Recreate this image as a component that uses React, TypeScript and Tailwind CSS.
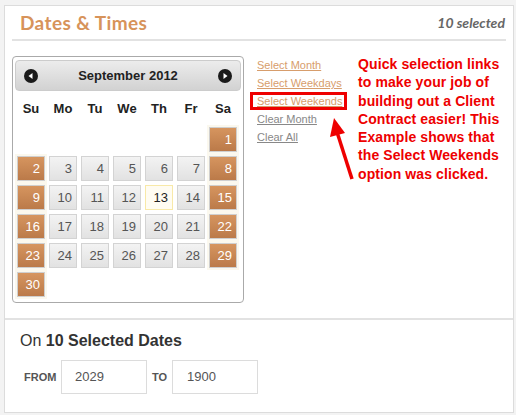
import React from "react";

const weeks: (number | null)[][] = [
  [null, null, null, null, null, null, 1],
  [2, 3, 4, 5, 6, 7, 8],
  [9, 10, 11, 12, 13, 14, 15],
  [16, 17, 18, 19, 20, 21, 22],
  [23, 24, 25, 26, 27, 28, 29],
  [30, null, null, null, null, null, null],
];

const days = ["Su", "Mo", "Tu", "We", "Th", "Fr", "Sa"];

function Arrow({ dir }: { dir: "l" | "r" }) {
  return (
    <svg width="14" height="14" viewBox="0 0 14 14">
      <circle cx="7" cy="7" r="7" fill="#1a1a1a" />
      {dir === "l" ? (
        <polygon points="4.5,7 8.5,4 8.5,10" fill="#fff" />
      ) : (
        <polygon points="9.5,7 5.5,4 5.5,10" fill="#fff" />
      )}
    </svg>
  );
}

function Cell({ d, col }: { d: number | null; col: number }) {
  if (d === null) return <div className="h-[29px] w-[32px]" />;
  const weekend = col === 0 || col === 6;
  const today = d === 13;
  let cls =
    "h-[25px] w-[28px] flex items-center justify-end pr-[4px] text-[13px] border ";
  if (weekend)
    cls +=
      "bg-gradient-to-b from-[#d6955f] to-[#bb7a49] border-[#cfcfcf] text-white";
  else if (today) cls += "bg-[#fffcf2] border-[#f8e9a8] text-[#222]";
  else
    cls +=
      "bg-gradient-to-b from-[#f3f3f3] to-[#e2e2e2] border-[#d3d3d3] text-[#555]";
  return (
    <div
      className={
        "h-[29px] w-[32px] flex items-center justify-center " +
        (weekend ? "bg-[#fbf8ee]" : "")
      }
    >
      <div className={cls}>{d}</div>
    </div>
  );
}

export default function App() {
  return (
    <div className="w-[516px] h-[415px] bg-[#f3f3f3] pt-[5px] pl-[4px] pr-[2px]" style={{ fontFamily: "'Liberation Sans', Arial, sans-serif" }}>
      <div className="relative w-[510px] h-[408px] bg-white border border-[#dcdcdc]">
        {/* header */}
        <div className="mx-[7px] h-[35px] border-b-2 border-[#e2e2e2] flex items-center justify-between pl-[8px] pr-[1px]">
          <span className="text-[19px] font-bold text-[#d7935a] tracking-[0.4px] mt-[1px]" style={{ fontFamily: "Lato, sans-serif" }}>
            Dates &amp; Times
          </span>
          <span className="text-[14px] font-bold italic text-[#666]" style={{ fontFamily: "Lato, sans-serif" }}>
            10 selected
          </span>
        </div>

        {/* body */}
        <div className="flex pl-[7px] pt-[15px] h-[278px]">
          <div className="w-[232px] h-[247px] border border-[#aaaaaa] rounded-[4px] px-[2px] pt-[3px]">
            <div className="h-[31px] rounded-[4px] border border-[#cccccc] bg-gradient-to-b from-[#ececec] to-[#d2d2d2] flex items-center justify-between px-[8px]">
              <Arrow dir="l" />
              <span className="text-[13px] font-bold text-[#222]">September 2012</span>
              <Arrow dir="r" />
            </div>
            <div className="flex mt-[5px]">
              {days.map((d) => (
                <div key={d} className="w-[32px] h-[26px] flex items-center justify-center text-[13px] font-bold text-[#222]">
                  {d}
                </div>
              ))}
            </div>
            <div className="mt-[3px]">
              {weeks.map((w, i) => (
                <div key={i} className="flex">
                  {w.map((d, j) => (
                    <Cell key={j} d={d} col={j} />
                  ))}
                </div>
              ))}
            </div>
          </div>

          <div className="ml-[6px] flex flex-col text-[11px] leading-[18px] pt-0">
            <a className="underline text-[#d79d6c] ml-[7px]">Select Month</a>
            <a className="underline text-[#d79d6c] ml-[7px]">Select Weekdays</a>
            <div className="border-[3px] border-[#ee0000] h-[18px] w-[97px] flex items-center">
              <a className="underline text-[#d79d6c] ml-[4px]">Select Weekends</a>
            </div>
            <a className="underline text-[#888] ml-[7px]">Clear Month</a>
            <a className="underline text-[#888] ml-[7px]">Clear All</a>
          </div>

          <div className="ml-[11px] text-[14px] font-bold text-[#ee0000] leading-[18.3px] -mt-[1px] tracking-[0.1px]">
            Quick selection links
            <br />
            to make your job of
            <br />
            building out a Client
            <br />
            Contract easier! This
            <br />
            Example shows that
            <br />
            the Select Weekends
            <br />
            option was clicked.
          </div>
        </div>

        {/* arrow overlay */}
        <svg className="absolute left-0 top-0" width="510" height="408" viewBox="0 0 510 408">
          <line x1="347" y1="173" x2="332" y2="126" stroke="#ee0000" strokeWidth="3.5" />
          <polygon points="329,112 325,131 340,127" fill="#ee0000" />
        </svg>

        {/* bottom */}
        <div className="-mt-[1px] border-t-2 border-[#e2e2e2] px-[15px] pt-[9px]">
          <div className="text-[16px] text-[#333]">
            On <span className="font-bold">10 Selected Dates</span>
          </div>
          <div className="flex items-center mt-[7px] ml-[4px]">
            <span className="text-[11px] font-bold text-[#555] w-[37px]">FROM</span>
            <div className="w-[86px] h-[34px] border border-[#dcdcdc] flex items-center pl-[13px] text-[13px] text-[#555]">2029</div>
            <span className="text-[11px] font-bold text-[#555] ml-[5px] w-[20px]">TO</span>
            <div className="w-[86px] h-[34px] border border-[#dcdcdc] flex items-center pl-[14px] text-[13px] text-[#555]">1900</div>
          </div>
        </div>
      </div>
    </div>
  );
}
